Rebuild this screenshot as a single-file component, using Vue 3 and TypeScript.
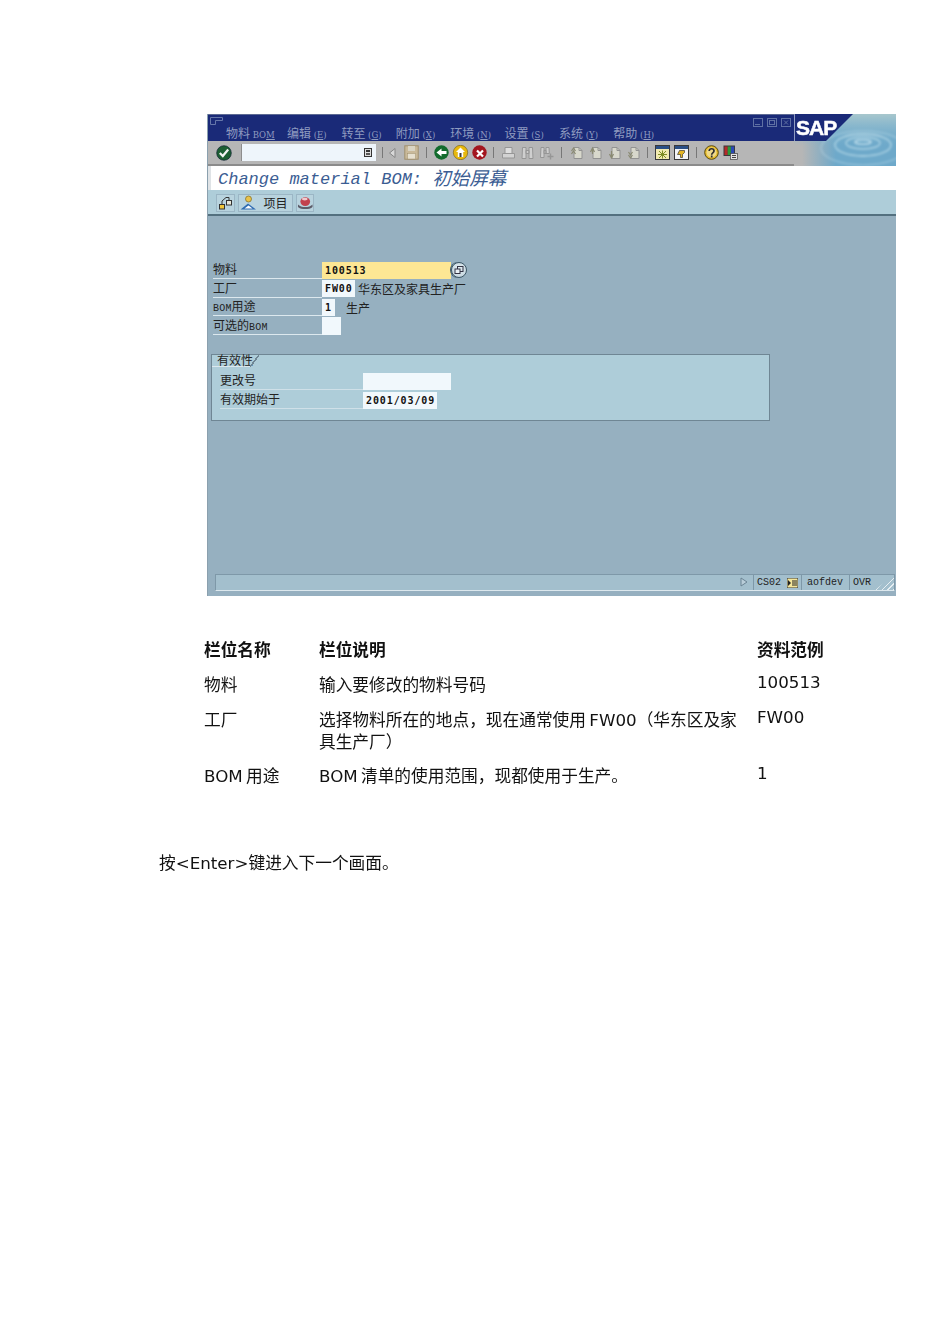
<script setup lang="ts">
const menus = ['物料', '编辑', '转至', '附加', '环境', '设置', '系统', '帮助'];
const menuKeys = ['', 'E', 'G', 'X', 'N', 'S', 'Y', 'H'];
const pageArrows = ['M2 5l2-3 2 3M2 8l2-3 2 3', 'M2 6l2-4 2 4M4 2v6', 'M2 8l2 4 2-4M4 5v7', 'M2 6l2 3 2-3M2 9l2 3 2-3'];
const rows = [
  { name: '物料', desc: '输入要修改的物料号码', sample: '100513' },
  { name: '工厂', desc: '选择物料所在的地点，现在通常使用 FW00（华东区及家具生产厂）', sample: 'FW00' },
  { name: 'BOM 用途', desc: 'BOM 清单的使用范围，现都使用于生产。', sample: '1' },
];
</script>

<template>
  <div class="page">
    <section class="sap">
      <header class="titlebar">
        <svg class="sysicon" width="14" height="9" viewBox="0 0 14 9"><path d="M.5.5h12v3h-7v4H.5z" fill="none" stroke="#6677aa"/></svg>
        <nav class="menus">
          <span v-for="(m, i) in menus" :key="m" class="menu">
            {{ m }}<template v-if="i === 0"><span class="latin"> BO<u>M</u></span></template><template v-else><span class="latin"> (<u>{{ menuKeys[i] }}</u>)</span></template>
          </span>
        </nav>
        <div class="winbtns">
          <svg width="10" height="9" viewBox="0 0 10 9"><rect x=".5" y=".5" width="9" height="8" fill="none" stroke="#5f70a3"/><path d="M2 6.500h5" stroke="#5f70a3"/></svg>
          <svg width="10" height="9" viewBox="0 0 10 9"><rect x=".5" y=".5" width="9" height="8" fill="none" stroke="#5f70a3"/><rect x="2.500" y="2.500" width="5" height="4" fill="none" stroke="#5f70a3"/></svg>
          <svg width="10" height="9" viewBox="0 0 10 9"><rect x=".5" y=".5" width="9" height="8" fill="none" stroke="#5f70a3"/><path d="M3 2.500l4 4M7 2.500l-4 4" stroke="#5f70a3"/></svg>
        </div>
      </header>

      <div class="logo">
        <svg width="102" height="52" viewBox="0 0 102 52">
          <defs>
            <linearGradient id="fade" gradientUnits="userSpaceOnUse" x1="8" x2="42" y1="0" y2="0">
              <stop offset="0" stop-color="#b6b6b6"/>
              <stop offset="1" stop-color="#6ea9ca"/>
            </linearGradient>
            <linearGradient id="sky" gradientUnits="userSpaceOnUse" x1="0" x2="0" y1="0" y2="32">
              <stop offset="0" stop-color="#a8c7cd"/>
              <stop offset="1" stop-color="#7db2cf" stop-opacity="0"/>
            </linearGradient>
            <filter id="soft"><feGaussianBlur stdDeviation=".9"/></filter>
          </defs>
          <rect width="102" height="52" fill="url(#fade)"/>
          <rect width="102" height="32" fill="url(#sky)"/>
          <g fill="none" stroke="#d8f0f6" filter="url(#soft)">
            <ellipse cx="69" cy="28" rx="8" ry="2.200" stroke-width="1.600" stroke-opacity=".7"/>
            <ellipse cx="69" cy="29" rx="17" ry="6" stroke-width="1.400" stroke-opacity=".55"/>
            <ellipse cx="69" cy="31" rx="28" ry="11" stroke-width="1.800" stroke-opacity=".5"/>
            <ellipse cx="69" cy="34" rx="42" ry="17" stroke-width="1.400" stroke-opacity=".3"/>
          </g>
          <path d="M0 0H59L32 27H0z" fill="#1a2a78"/>
          <path d="M0.500 0V27" stroke="#8f9bc0"/>
        </svg>
        <span class="saptext">SAP</span>
      </div>

      <div class="toolbar">
        <svg class="ok" width="16" height="16" viewBox="0 0 16 16"><circle cx="8" cy="8" r="7.300" fill="#1d5f33" stroke="#123"  stroke-width=".7"/><path d="M3.800 8l3 3 5.400-6.500" fill="none" stroke="#f4f4f4" stroke-width="2.200"/></svg>
        <div class="cmd"><svg width="8" height="9" viewBox="0 0 8 9"><rect x=".5" y=".5" width="7" height="8" fill="#ddd" stroke="#333"/><rect x="2" y="2" width="4" height="2" fill="#333"/><rect x="2" y="5" width="4" height="2" fill="#555"/></svg></div>
        <i class="sep first"></i>
        <svg class="tb" width="10" height="12" viewBox="0 0 10 12"><path d="M7.500 1.500L2 6l5.500 4.500z" fill="#d8d8d8" stroke="#858585"/></svg>
        <svg class="tb" width="15" height="15" viewBox="0 0 15 15"><rect x=".8" y=".8" width="13.400" height="13.400" fill="#c9b99a" stroke="#a08f6e"/><rect x="4" y="1" width="7" height="5" fill="#d9d4c4"/><rect x="3.500" y="8.500" width="8" height="5.500" fill="#e6e0d0" stroke="#a08f6e" stroke-width=".5"/></svg>
        <i class="sep"></i>
        <svg class="tb" width="15" height="15" viewBox="0 0 15 15"><circle cx="7.500" cy="7.500" r="7.200" fill="#126b2d"/><path d="M2.500 7.500L7.500 3.500V6h5v3h-5v2.500z" fill="#fff"/></svg>
        <svg class="tb" width="15" height="15" viewBox="0 0 15 15"><circle cx="7.500" cy="7.500" r="7.200" fill="#e8b90f" stroke="#5a4708" stroke-width=".5"/><path d="M7.500 2.500L12 7H3z" fill="#fff"/><rect x="4.800" y="7" width="5.400" height="5" fill="#fff"/><rect x="6.500" y="8" width="2" height="4" fill="#3b3b3b"/></svg>
        <svg class="tb" width="15" height="15" viewBox="0 0 15 15"><circle cx="7.500" cy="7.500" r="7.200" fill="#a3161f"/><path d="M5 5.500l6 6M11 5.500l-6 6" stroke="#fff" stroke-width="2.200"/></svg>
        <i class="sep"></i>
        <svg class="tb" width="14" height="14" viewBox="0 0 14 14"><path d="M3.500 1.500h7v6h-7z" fill="#dedede" stroke="#969696"/><path d="M1 7.500h12v4.500H1z" fill="#d2d2d2" stroke="#969696"/></svg>
        <svg class="tb" width="14" height="14" viewBox="0 0 14 14"><path d="M2 1.500h3.500v11H1.500zM8.500 1.500H12l.5 11h-4zM5.500 4.500h3v3h-3z" fill="#cfcfcf" stroke="#969696"/></svg>
        <svg class="tb" width="14" height="14" viewBox="0 0 14 14"><path d="M1.500 1.500h3v10H1zM6.500 1.500h3l.3 6H6.500zM4.500 4.500h2v3h-2z" fill="#cfcfcf" stroke="#969696"/><path d="M11 7.500v6M8 10.500h6" stroke="#969696" stroke-width="1.400"/></svg>
        <i class="sep"></i>
        <svg v-for="(a, n) in pageArrows" :key="n" class="tb" width="14" height="14" viewBox="0 0 14 14"><path d="M4.500 1.500h5l3 3v8h-8z" fill="#d8d8cc" stroke="#929292"/><path d="M9.500 1.500v3h3" fill="none" stroke="#929292"/><path :d="a" fill="none" stroke="#8a8a72" stroke-width="1.200"/></svg>
        <i class="sep"></i>
        <svg class="tb" width="15" height="15" viewBox="0 0 15 15"><rect x=".5" y=".5" width="14" height="14" fill="#f2eab0" stroke="#39393a"/><rect x="1" y="1" width="13" height="3" fill="#2a4f86"/><path d="M4 6l7 7M11 6l-7 7M7.500 5.500v8M3 9.500h9" stroke="#7f8d26"/></svg>
        <svg class="tb" width="15" height="15" viewBox="0 0 15 15"><rect x=".5" y=".5" width="14" height="14" fill="#f2f4f6" stroke="#39393a"/><rect x="1" y="1" width="13" height="3" fill="#2a4f86"/><path d="M3.500 9.500h3v3h2v-3l2-2V5.500h-5z" fill="#e4b523" stroke="#222" stroke-width=".6"/></svg>
        <i class="sep"></i>
        <svg class="tb" width="15" height="15" viewBox="0 0 15 15"><circle cx="7.500" cy="7.500" r="6.800" fill="#e6bb2a" stroke="#5b4a0c" stroke-width="1"/><circle cx="7.500" cy="7.500" r="5" fill="#efd98a"/><path d="M5.200 6c0-3 4.800-3 4.800 0 0 2-2.300 1.800-2.300 3.700M7.700 10.500v2" fill="none" stroke="#2d2d2d" stroke-width="1.700"/></svg>
        <svg class="tb" width="15" height="15" viewBox="0 0 15 15"><rect x=".5" y=".5" width="11.500" height="10.500" fill="#39393a"/><rect x="1.500" y="1.500" width="3.200" height="8.500" fill="#b52a2a"/><rect x="4.700" y="1.500" width="3.200" height="8.500" fill="#2c9b3a"/><rect x="7.900" y="1.500" width="3.200" height="8.500" fill="#2a48b5"/><rect x="7.500" y="8.500" width="7" height="6" fill="#e3e3e3" stroke="#444" stroke-width=".7"/><path d="M9 10.500h4M9 12.500h4" stroke="#444"/></svg>
      </div>

      <div class="titleline">Change material BOM: <span class="cjk">初始屏幕</span></div>

      <div class="apptool">
        <span class="btn square"><svg width="15" height="14" viewBox="0 0 15 14"><path d="M4 9V5l4-3.500M11 5V1.500H8" fill="none" stroke="#333"/><rect x="1.500" y="8.500" width="5" height="4.500" fill="#f0c63a" stroke="#333"/><rect x="8.500" y="4.500" width="5" height="4.500" fill="#e7e7d8" stroke="#333"/></svg></span>
        <span class="btn wide"><svg width="17" height="15" viewBox="0 0 17 15"><circle cx="8.500" cy="4" r="3" fill="#e9c24a" stroke="#6e5a16" stroke-width=".6"/><path d="M.5 14.500l7.500-6 8 6z" fill="#2f6cb2"/><path d="M4.500 13.500l4-3 4 3z" fill="#fff"/></svg><span>项目</span></span>
        <span class="btn square"><svg width="17" height="14" viewBox="0 0 17 14"><ellipse cx="8.500" cy="5.500" rx="5" ry="4.500" fill="#c2414e"/><ellipse cx="8" cy="3" rx="3" ry="1.500" fill="#f0c8cc"/><path d="M1 8.500c3 3.500 12 3.500 15 0v2.500c-3 3-12 3-15 0z" fill="#5d5d6a"/></svg></span>
      </div>

      <main class="content">
        <div class="fields">
          <div class="row"><label class="lab">物料</label><span class="inp req mono">100513</span><span class="match"><svg width="10" height="9" viewBox="0 0 10 9"><rect x="3.500" y=".5" width="5.500" height="5" fill="none" stroke="#334"/><rect x="1" y="3" width="5" height="4.500" fill="#e8f0f4" stroke="#334"/></svg></span></div>
          <div class="row"><label class="lab">工厂</label><span class="inp w32 mono">FW00</span><span class="txt">华东区及家具生产厂</span></div>
          <div class="row"><label class="lab"><b class="mini">BOM</b>用途</label><span class="inp w13 mono">1</span><span class="txt gap">生产</span></div>
          <div class="row"><label class="lab">可选的<b class="mini">BOM</b></label><span class="inp w19"></span></div>
        </div>

        <fieldset class="group">
          <div class="tab"><span>有效性</span></div>
          <div class="row inner"><label class="lab2">更改号</label><span class="inp w88"></span></div>
          <div class="row inner"><label class="lab2">有效期始于</label><span class="inp w74 mono">2001/03/09</span></div>
        </fieldset>

        <div class="status">
          <div class="msg"><svg width="8" height="10" viewBox="0 0 8 10"><path d="M1 1l6 4-6 4z" fill="#b9cdd9" stroke="#6b8494"/></svg></div>
          <span class="cell c1">CS02<svg width="11" height="10" viewBox="0 0 11 10"><rect width="11" height="10" fill="#f5e79a" stroke="#333"/><path d="M1 2l3 3-3 3z" fill="#222"/><path d="M5 3h5M5 5h5M5 7h5" stroke="#222"/></svg></span>
          <span class="cell c2">aofdev</span>
          <span class="cell c3">OVR</span>
          <span class="grip"></span>
        </div>
      </main>
    </section>

    <div class="doc">
      <div class="tr head"><div>栏位名称</div><div>栏位说明</div><div>资料范例</div></div>
      <div v-for="r in rows" :key="r.name" class="tr"><div>{{ r.name }}</div><div>{{ r.desc }}</div><div class="sample">{{ r.sample }}</div></div>
    </div>
    <p class="note">按&lt;Enter&gt;键进入下一个画面。</p>
  </div>
</template>

<style>
html, body { margin: 0; background: #fff; }
</style>

<style scoped>
.page { width: 950px; height: 1344px; box-sizing: border-box; padding-top: 114px; font-family: "DejaVu Sans", "Noto Sans CJK SC", sans-serif; color: #111; overflow: hidden; }
.sap { width: 689px; height: 482px; margin-left: 207px; display: flex; flex-direction: column; font-family: "Noto Sans CJK SC", sans-serif; font-size: 12px; border-left: 1px solid #8ba0ae; box-sizing: border-box; position: relative; filter: blur(.4px); }
.titlebar { height: 27px; flex: none; box-sizing: border-box; background: #1a2a78; border-top: 1px solid #5d6a93; position: relative; display: flex; }
.logo { position: absolute; right: 0; top: 0; width: 102px; height: 52px; z-index: 2; }
.logo svg { display: block; }
.saptext { position: absolute; left: 2px; top: 1px; color: #fff; font: 700 21px/26px "Liberation Sans", sans-serif; letter-spacing: -1px; -webkit-text-stroke: .5px #fff; }
.sysicon { position: absolute; left: 2px; top: 2px; }
.menus { display: flex; padding: 11px 0 0 18px; color: #8f9bc0; font-size: 12px; line-height: 14px; white-space: nowrap; }
.menu { width: 54.400px; }
.menu:first-child { width: 61px; }
.latin { font-family: "DejaVu Serif", serif; font-size: 8.500px; }
.winbtns { position: absolute; right: 105px; top: 3px; display: flex; gap: 4px; }
.toolbar { height: 25px; flex: none; box-sizing: border-box; background: #b6b6b6; border-bottom: 2px solid #8b8b8b; display: flex; align-items: center; padding-left: 8px; position: relative; }
.ok { margin-right: 9px; flex: none; }
.cmd { width: 135px; height: 17px; flex: none; background: #eef5fb; border-left: 1px solid #8d8d8d; display: flex; align-items: center; justify-content: flex-end; padding-right: 4px; box-sizing: border-box; }
.sep { width: 1px; height: 11px; background: #777; margin: 0 4.750px; flex: none; }
.sep.first { margin: 0 0 0 6px; }
.tb { flex: 0 0 19px; width: 19px; }
.titleline { height: 24px; flex: none; background: #fff; border-left: 3px solid #dfe3e6; padding-left: 7px; font: italic 17px/28px "Liberation Mono", "Noto Sans CJK SC", monospace; color: #3b5d93; box-sizing: border-box; white-space: nowrap; overflow: hidden; }
.cjk { font-size: 18.500px; position: relative; top: 1px; }
.apptool { height: 26px; flex: none; box-sizing: border-box; background: #aecdd9; border-bottom: 2px solid #53707f; display: flex; align-items: center; padding: 1px 0 0 8px; gap: 3px; }
.btn { height: 18px; display: flex; align-items: center; justify-content: center; background: #b8d3de; border: 1px solid #9bb6c5; box-sizing: border-box; color: #222; font-size: 12px; }
.square { width: 18.500px; }
.wide { width: 55px; gap: 6px; padding-right: 2px; }
.content { flex: 1; background: #96b0c0; padding: 45px 0 0 5px; display: flex; flex-direction: column; }
.fields { display: flex; flex-direction: column; }
.row { height: 18.600px; flex: none; display: flex; align-items: center; color: #222; font-size: 12px; }
.lab { width: 109px; height: 17px; line-height: 16px; border-bottom: 1px solid #dce8ee; box-sizing: content-box; flex: none; white-space: nowrap; }
.mini { font: 400 10px "Liberation Mono", monospace; letter-spacing: .2px; }
.c1, .c2, .c3 { font-family: "Liberation Mono", monospace; font-weight: 400; }
.inp { height: 17px; line-height: 17px; background: #f1f8fc; box-sizing: border-box; padding-left: 3px; color: #111; flex: none; }
.mono { font: 700 10px/17px "DejaVu Sans Mono", monospace; letter-spacing: .9px; }
.req { width: 129px; background: #fde794; }
.match { width: 16px; height: 16px; border-radius: 50%; background: radial-gradient(circle at 50% 40%, #e6f0f4 0, #bccfd9 100%); border: 1px solid #3d5766; box-shadow: -1px 0 0 #3d5766; display: flex; align-items: center; justify-content: center; box-sizing: border-box; }
.w32 { width: 33px; }
.w13 { width: 13px; }
.w19 { width: 19px; height: 18px; }
.txt { margin-left: 3px; white-space: nowrap; }
.gap { margin-left: 11px; }
.group { margin: 18.600px 0 0 -2px; width: 559px; height: 67px; box-sizing: border-box; border: 1px solid #6f8694; background: #aecdd9; padding: 17px 0 0 8px; position: relative; min-width: 0; }
.tab { position: absolute; left: 0; top: 0; width: 38px; height: 12px; border-bottom: 1px solid #dce8ee; line-height: 9px; padding-left: 5px; box-sizing: border-box; color: #222; font-size: 12px; white-space: nowrap; }
.tab::after { content: ""; position: absolute; left: 38px; top: 0; width: 9px; height: 12px; background: linear-gradient(to bottom right, transparent 44%, #6f8694 45% 55%, transparent 56%); }
.inner { height: 19px; }
.lab2 { width: 143px; height: 17px; line-height: 16px; border-bottom: 1px solid #cfe0e8; flex: none; }
.w88 { width: 88px; }
.w74 { width: 74px; }
.status { height: 17px; width: 680px; margin: 153px 0 0 2px; box-sizing: border-box; background: #a3bfcd; border: 1px solid #7e98a8; border-bottom-color: #dce8ee; display: flex; align-items: center; color: #222; }
.msg { flex: 1; display: flex; justify-content: flex-end; padding-right: 5px; }
.cell { height: 100%; box-sizing: border-box; border-left: 1px solid #7e98a8; display: flex; align-items: center; font-size: 10px; flex: none; padding-top: 1px; }
.c1 { width: 48px; padding-left: 3px; gap: 6px; }
.c2 { width: 48px; padding-left: 5px; }
.c3 { width: 26px; padding-left: 3px; }
.grip { width: 19px; height: 100%; background: repeating-linear-gradient(135deg, #a3bfcd 0 3px, #e6eef2 3px 4px); clip-path: polygon(100% 0, 100% 100%, 0 100%); flex: none; }
.doc { margin: 43px 0 0 204px; width: 640px; filter: blur(.2px); }
.tr { display: grid; grid-template-columns: 115px 438px 80px; font-size: 16.700px; line-height: 22px; padding-bottom: 12.500px; word-spacing: -2px; }
.tr > div { padding-right: 10px; }
.tr.head { font-weight: 700; padding-bottom: 13px; }
.sample { margin-top: -3px; }
.note { margin: 52px 0 0 159px; font-size: 16.700px; line-height: 22px; filter: blur(.2px); }
</style>
